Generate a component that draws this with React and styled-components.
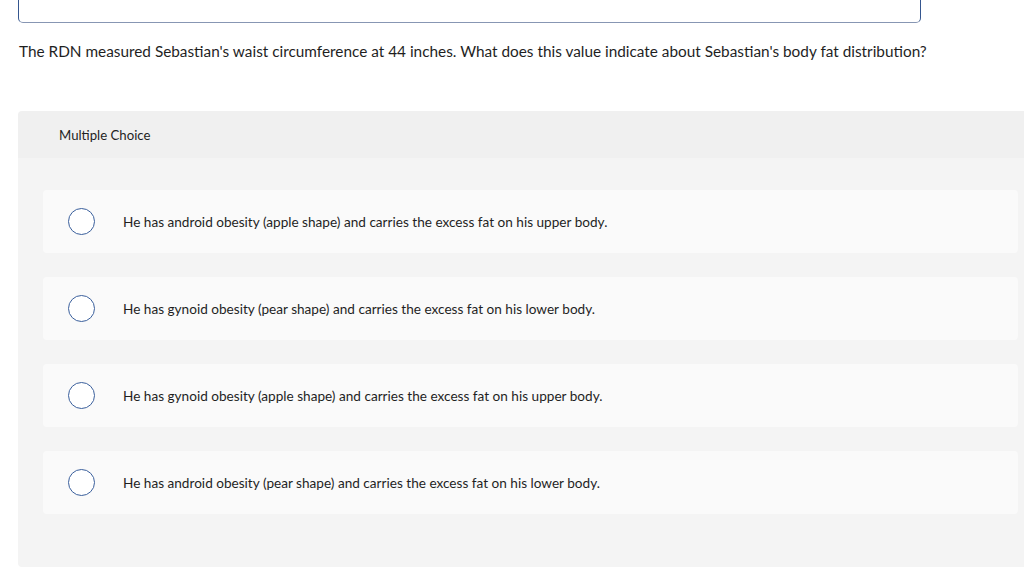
import * as React from 'react';
import styled, { createGlobalStyle } from 'styled-components';

const GlobalStyle = createGlobalStyle`
  body {
    margin: 0;
    background: #fff;
    overflow: hidden;
    font-family: Lato, 'Liberation Sans', sans-serif;
    color: #222;
  }
`;

const Page = styled.div`
  padding-left: 18px;
`;

const AnswerBox = styled.div`
  width: 901px;
  height: 22px;
  border: 1px solid #35568f;
  border-top: none;
  border-bottom-color: #8796b3;
  border-radius: 0 0 5px 5px;
`;

const Question = styled.p`
  margin: 18px 0 0 1px;
  font-size: 15.35px;
  line-height: 20px;
  color: #1f1f1f;
`;

const Panel = styled.section`
  margin-top: 50px;
  border-radius: 4px 0 0 4px;
  overflow: hidden;
`;

const PanelHeader = styled.div`
  height: 47px;
  display: flex;
  align-items: center;
  padding-left: 41px;
  background: #f0f0f0;
  font-size: 13.2px;
  color: #1f1f1f;
`;

const ChoiceList = styled.div`
  display: flex;
  flex-direction: column;
  gap: 24px;
  padding: 32px 0 53px 25px;
  background: #f4f4f4;
`;

const ChoiceCard = styled.label`
  width: 975px;
  height: 63px;
  display: flex;
  align-items: center;
  gap: 28px;
  padding-left: 25px;
  box-sizing: border-box;
  background: #fafafa;
  border-radius: 4px;
  font-size: 13.6px;
  color: #1f1f1f;
  cursor: pointer;
`;

const Radio = styled.span`
  width: 27px;
  height: 27px;
  box-sizing: border-box;
  border: 1.5px solid #3a5f9c;
  border-radius: 50%;
  background: #fff;
  flex-shrink: 0;
`;

const choices = [
  'He has android obesity (apple shape) and carries the excess fat on his upper body.',
  'He has gynoid obesity (pear shape) and carries the excess fat on his lower body.',
  'He has gynoid obesity (apple shape) and carries the excess fat on his upper body.',
  'He has android obesity (pear shape) and carries the excess fat on his lower body.',
];

const App = () => {
  return (
    <>
      <GlobalStyle />
      <Page>
        <AnswerBox />
        <Question>
          The RDN measured Sebastian's waist circumference at 44 inches. What does this value
          indicate about Sebastian's body fat distribution?
        </Question>
        <Panel>
          <PanelHeader>Multiple Choice</PanelHeader>
          <ChoiceList>
            {choices.map((choice, idx) => (
              <ChoiceCard key={`choice ${idx + 1}`}>
                <Radio />
                <span>{choice}</span>
              </ChoiceCard>
            ))}
          </ChoiceList>
        </Panel>
      </Page>
    </>
  );
};

export default App;
